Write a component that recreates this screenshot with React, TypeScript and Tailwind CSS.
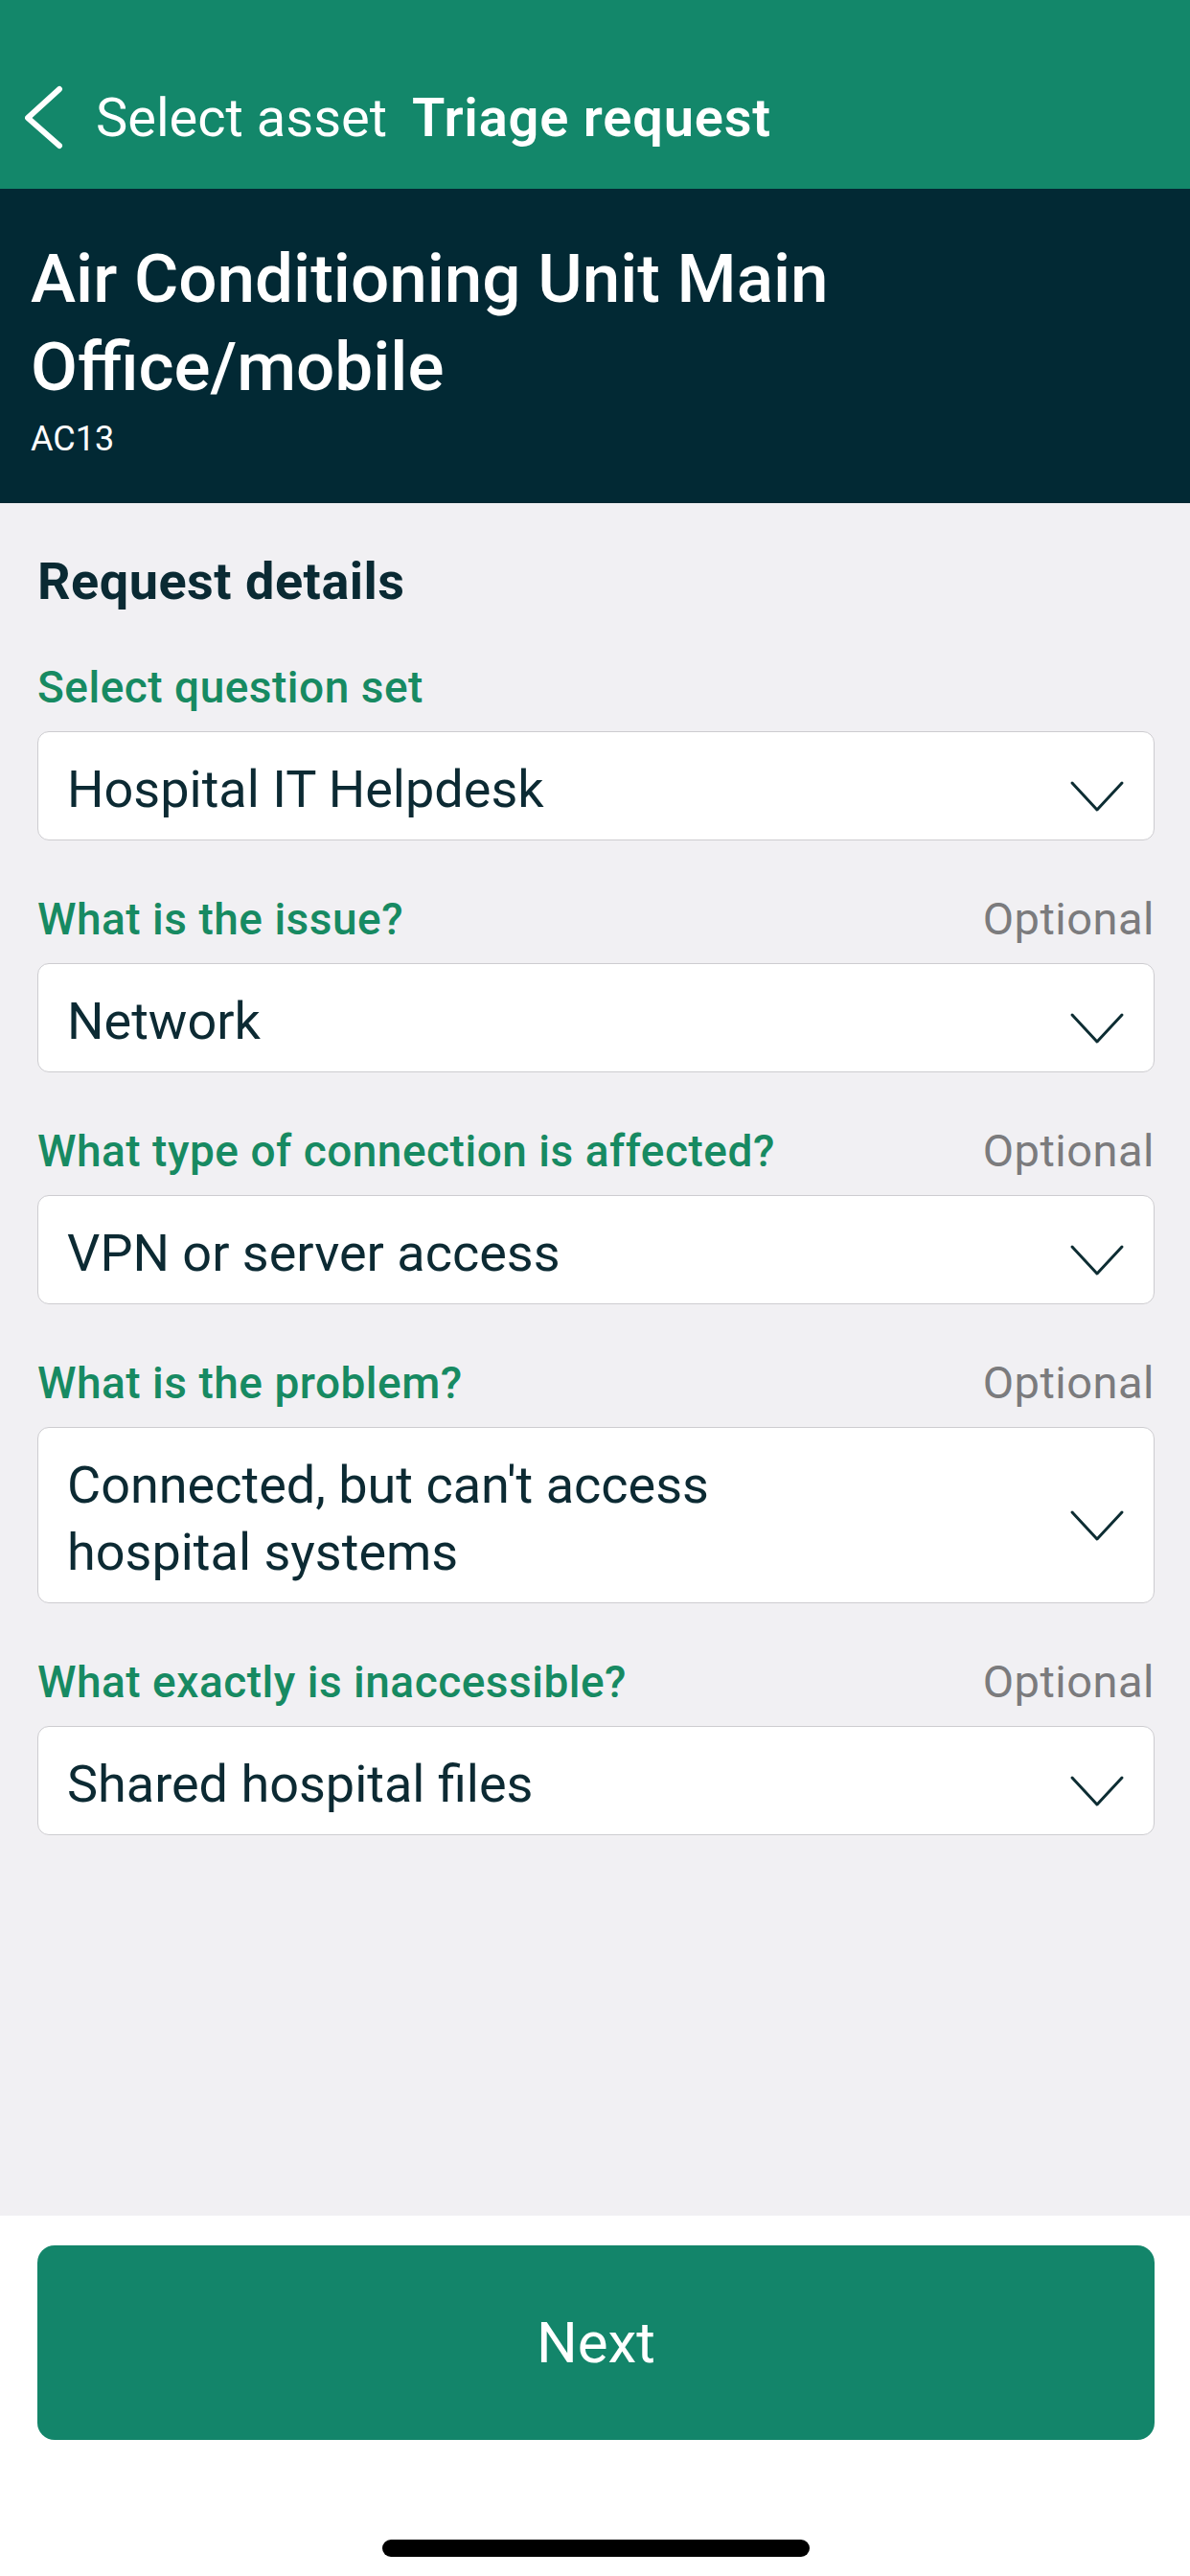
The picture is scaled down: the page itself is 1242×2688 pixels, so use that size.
import React from 'react';

type Field = {
  label: string;
  value: string;
  optional?: boolean;
};

const fields: Field[] = [
  { label: 'Select question set', value: 'Hospital IT Helpdesk' },
  { label: 'What is the issue?', value: 'Network', optional: true },
  { label: 'What type of connection is affected?', value: 'VPN or server access', optional: true },
  { label: 'What is the problem?', value: "Connected, but can't access hospital systems", optional: true },
  { label: 'What exactly is inaccessible?', value: 'Shared hospital files', optional: true },
];

function ChevronDown() {
  return (
    <svg width="58" height="34" viewBox="0 0 58 34" fill="none" className="mt-[14px] shrink-0">
      <polyline points="3,3 29,31 55,3" stroke="#0d2d33" strokeWidth="3" strokeLinecap="round" strokeLinejoin="round" />
    </svg>
  );
}

function SelectField({ field }: { field: Field }) {
  return (
    <div className="flex flex-col">
      <div className="flex items-baseline justify-between">
        <span className="text-[46px] leading-[54px] font-medium tracking-[0.5px] text-[#178a62]">{field.label}</span>
        {field.optional && (
          <span className="text-[47px] leading-[54px] tracking-[0.5px] text-[#7b7b7d]">Optional</span>
        )}
      </div>
      <div className="mt-[19px] flex items-center justify-between rounded-[12px] border-[1.5px] border-[#cdccd0] bg-white pl-[30px] pr-[30px] pt-[25px] pb-[17px]">
        <span className="max-w-[800px] text-[54px] leading-[70px] text-[#0c2a33]">{field.value}</span>
        <ChevronDown />
      </div>
    </div>
  );
}

export default function App() {
  return (
    <div className="flex min-h-[2688px] w-[1242px] flex-col bg-white font-['Roboto',sans-serif]">
      {/* Green nav bar */}
      <div className="flex h-[197px] items-center bg-[#13876a] pl-[26px] pt-[48px]">
        <svg width="40" height="68" viewBox="0 0 40 68" fill="none">
          <polyline points="36,4 3,34 36,63" stroke="white" strokeWidth="6" strokeLinecap="round" strokeLinejoin="round" />
        </svg>
        <span className="ml-[34px] text-[56px] leading-[56px] text-white">Select asset</span>
        <span className="ml-[26px] text-[56px] leading-[56px] font-semibold tracking-[0.8px] text-white">Triage request</span>
      </div>

      {/* Asset header */}
      <div className="bg-[#022934] px-[32px] pt-[48px] pb-[45px]">
        <h1 className="text-[71px] leading-[92px] font-medium text-white">Air Conditioning Unit Main Office/mobile</h1>
        <p className="mt-[7px] text-[36px] leading-[44px] text-white">AC13</p>
      </div>

      {/* Form */}
      <div className="flex flex-1 flex-col bg-[#f1f0f3] pl-[39px] pr-[37px] pt-[51px]">
        <h2 className="text-[54px] leading-[62px] font-bold tracking-[0.5px] text-[#0a2a33]">Request details</h2>
        <div className="mt-[52px] flex flex-col gap-[55px]">
          {fields.map((f) => (
            <SelectField key={f.label} field={f} />
          ))}
        </div>
      </div>

      {/* Footer */}
      <div className="flex h-[376px] flex-col items-center bg-white pl-[39px] pr-[37px] pt-[31px]">
        <button className="flex h-[203px] w-full items-center justify-center rounded-[18px] bg-[#13856a] text-[60px] text-white">
          Next
        </button>
        <div className="mt-[104px] h-[18px] w-[446px] rounded-full bg-black" />
      </div>
    </div>
  );
}
